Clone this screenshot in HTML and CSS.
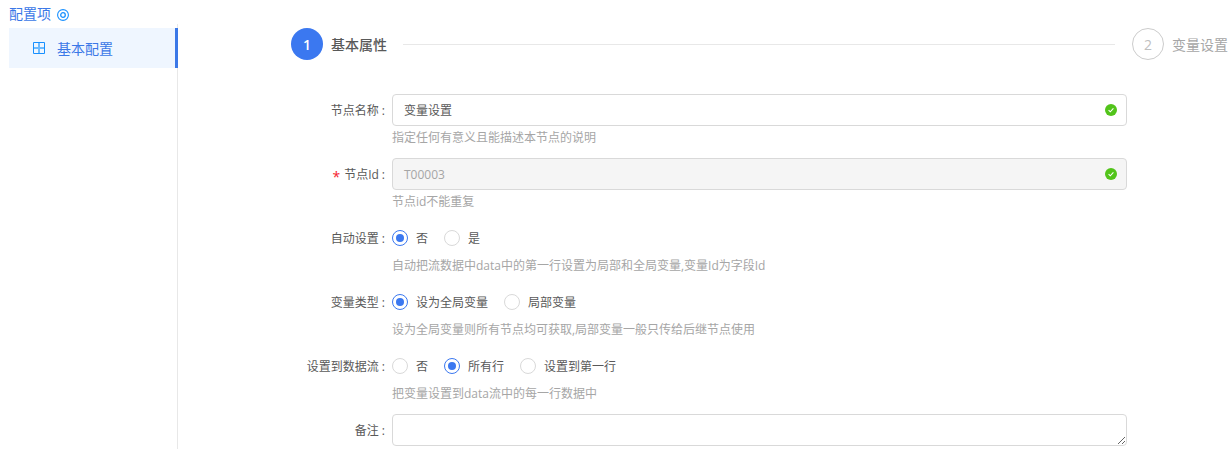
FILE: index.html
```html
<!DOCTYPE html>
<html lang="zh">
<head>
<meta charset="utf-8">
<title>配置项</title>
<link rel="stylesheet" href="styles.css">
</head>
<body>
<div class="page">
  <aside class="side">
    <div class="side-title">配置项
      <svg class="target" viewBox="0 0 12 12" width="12" height="12"><circle cx="6" cy="6" r="5.4" fill="none" stroke="#1890ff" stroke-width="1.1"/><circle cx="6" cy="6" r="2.3" fill="none" stroke="#1890ff" stroke-width="1.3"/></svg>
    </div>
    <nav class="side-nav">
      <div class="side-item">
        <svg class="grid-icon" viewBox="0 0 12 12" width="12" height="12"><path d="M6 0v12M0 6h12" fill="none" stroke="#6dbbff" stroke-width="2"/><path d="M.5.5h11v11H.5z" fill="none" stroke="#1890ff" stroke-width="1"/></svg>
        <span>基本配置</span>
      </div>
    </nav>
  </aside>
  <main class="main">
    <div class="steps">
      <div class="step-num step-active">1</div>
      <div class="step-title">基本属性</div>
      <div class="step-line"></div>
      <div class="step-num step-wait">2</div>
      <div class="step-title step-title-wait">变量设置</div>
    </div>
    <form class="form">
      <div class="row">
        <label class="label">节点名称<i class="colon">:</i></label>
        <div class="control">
          <div class="input"><span>变量设置</span><svg class="ok" viewBox="0 0 12 12" width="12" height="12"><circle cx="6" cy="6" r="6" fill="#52c41a"/><path d="M3.6 6.1l1.7 1.7 3.1-3.4" fill="none" stroke="#fff" stroke-width="1.1"/></svg></div>
          <div class="help">指定任何有意义且能描述本节点的说明</div>
        </div>
      </div>
      <div class="row">
        <label class="label"><b class="req">*</b>节点Id<i class="colon">:</i></label>
        <div class="control">
          <div class="input input-disabled"><span>T00003</span><svg class="ok" viewBox="0 0 12 12" width="12" height="12"><circle cx="6" cy="6" r="6" fill="#52c41a"/><path d="M3.6 6.1l1.7 1.7 3.1-3.4" fill="none" stroke="#fff" stroke-width="1.1"/></svg></div>
          <div class="help">节点id不能重复</div>
        </div>
      </div>
      <div class="row">
        <label class="label">自动设置<i class="colon">:</i></label>
        <div class="control">
          <div class="radios">
            <span class="radio"><i class="dot on"></i>否</span>
            <span class="radio"><i class="dot"></i>是</span>
          </div>
          <div class="help">自动把流数据中data中的第一行设置为局部和全局变量,变量Id为字段Id</div>
        </div>
      </div>
      <div class="row">
        <label class="label">变量类型<i class="colon">:</i></label>
        <div class="control">
          <div class="radios">
            <span class="radio"><i class="dot on"></i>设为全局变量</span>
            <span class="radio"><i class="dot"></i>局部变量</span>
          </div>
          <div class="help">设为全局变量则所有节点均可获取,局部变量一般只传给后继节点使用</div>
        </div>
      </div>
      <div class="row">
        <label class="label">设置到数据流<i class="colon">:</i></label>
        <div class="control">
          <div class="radios">
            <span class="radio"><i class="dot"></i>否</span>
            <span class="radio"><i class="dot on"></i>所有行</span>
            <span class="radio"><i class="dot"></i>设置到第一行</span>
          </div>
          <div class="help">把变量设置到data流中的每一行数据中</div>
        </div>
      </div>
      <div class="row">
        <label class="label">备注<i class="colon">:</i></label>
        <div class="control">
          <textarea class="textarea"></textarea>
        </div>
      </div>
    </form>
  </main>
</div>
</body>
</html>
```
FILE: styles.css
```css
* { box-sizing: border-box; }
html, body { margin: 0; padding: 0; height: 449px; overflow: hidden; background: #fff; }
body { font-family: "Open Sans", "Noto Sans CJK SC", sans-serif; font-size: 12px; color: #595959; }
.page { display: flex; height: 449px; overflow: hidden; }

.side { margin-left: 9px; flex: none; width: 169px; display: flex; flex-direction: column; }
.side-title { height: 24px; padding-top: 4px; line-height: 19px; font-size: 14px; color: #3b78e7; white-space: nowrap; }
.target { vertical-align: -2px; margin-left: 2px; }
.side-nav { flex: 1; border-right: 1px solid #e8e8e8; padding-top: 4px; }
.side-item { height: 40px; margin-right: -1px; background: #eff6ff; border-right: 3px solid #3b78e7; display: flex; align-items: center; padding-left: 24px; font-size: 14px; color: #3b78e7; }
.grid-icon { margin-right: 12px; }

.main { flex: 1; padding: 28px 0 0 113px; min-width: 0; }
.steps { display: flex; align-items: center; height: 32px; width: 937px; }
.step-num { width: 32px; height: 32px; flex: none; border-radius: 50%; display: flex; align-items: center; justify-content: center; font-size: 14px; }
.step-active { background: #3b78f0; color: #fff; font-weight: 600; }
.step-wait { border: 1px solid #ccc; color: #bfbfbf; }
.step-title { margin-left: 8px; font-size: 14px; font-weight: 500; color: #595959; white-space: nowrap; }
.step-title-wait { font-weight: 400; color: #a6a6a6; }
.step-line { flex: 1; height: 1px; background: #e8e8e8; margin: 0 17px 0 16px; }

.form { margin-top: 34px; width: 836px; }
.row { display: flex; height: 64px; }
.label { width: 101px; flex: none; height: 32px; display: flex; align-items: center; justify-content: flex-end; color: #595959; white-space: nowrap; }
.colon { font-style: normal; margin: 0 7px 0 3px; }
.req { font-weight: 400; font-size: 14px; color: #f5222d; margin: 4px 4px 0 0; }
.control { width: 735px; }
.input { height: 32px; border: 1px solid #d9d9d9; border-radius: 4px; display: flex; align-items: center; justify-content: space-between; padding: 0 9px 0 11px; color: #595959; }
.input-disabled { background: #f5f5f5; color: #a6a6a6; }
.help { margin-top: 3px; line-height: 18px; color: #a6a6a6; white-space: nowrap; }
.radios { height: 32px; display: flex; align-items: center; gap: 16px; }
.radio { display: flex; align-items: center; gap: 8px; color: #595959; white-space: nowrap; }
.dot { width: 16px; height: 16px; border: 1px solid #d9d9d9; border-radius: 50%; background: #fff; display: flex; align-items: center; justify-content: center; }
.dot.on { border-color: #3b78f0; }
.dot.on::after { content: ""; width: 8px; height: 8px; border-radius: 50%; background: #3b78f0; }
.textarea { display: block; width: 735px; height: 32px; border: 1px solid #d9d9d9; border-radius: 4px; background: #fff; margin: 0; }
```
